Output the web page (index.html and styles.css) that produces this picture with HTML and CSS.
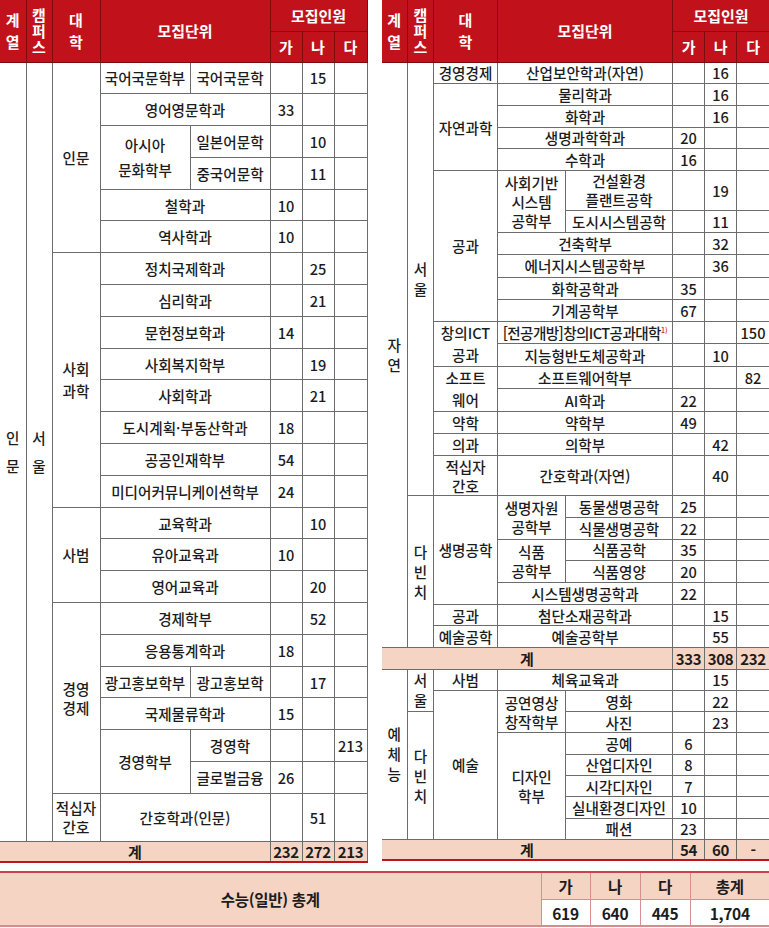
FILE: index.html
```html
<!DOCTYPE html>
<html lang="ko">
<head>
<meta charset="utf-8">
<title>수능(일반) 모집인원</title>
<link rel="stylesheet" href="styles.css">
</head>
<body>
<div class="page">
  <div class="tables">
    <table class="t tl">
      <colgroup><col class="w26"><col class="w26"><col class="w48"><col class="w90"><col class="w80"><col class="w32"><col class="w32"><col class="w33"></colgroup>
      <thead>
        <tr class="hr"><th rowspan="2" class="hv">계<br>열</th><th rowspan="2" class="hv3">캠<br>퍼<br>스</th><th rowspan="2" class="hv">대<br>학</th><th rowspan="2" colspan="2">모집단위</th><th colspan="3">모집인원</th></tr>
        <tr class="hr"><th>가</th><th>나</th><th>다</th></tr>
      </thead>
      <tbody>
        <tr><td rowspan="24" class="vl">인<br>문</td><td rowspan="24" class="vl">서<br>울</td><td rowspan="6">인문</td><td>국어국문학부</td><td>국어국문학</td><td></td><td>15</td><td></td></tr>
        <tr><td colspan="2">영어영문학과</td><td>33</td><td></td><td></td></tr>
        <tr><td rowspan="2" class="lh25">아시아<br>문화학부</td><td>일본어문학</td><td></td><td>10</td><td></td></tr>
        <tr><td>중국어문학</td><td></td><td>11</td><td></td></tr>
        <tr><td colspan="2">철학과</td><td>10</td><td></td><td></td></tr>
        <tr><td colspan="2">역사학과</td><td>10</td><td></td><td></td></tr>
        <tr><td rowspan="8" class="lh22">사회<br>과학</td><td colspan="2">정치국제학과</td><td></td><td>25</td><td></td></tr>
        <tr><td colspan="2">심리학과</td><td></td><td>21</td><td></td></tr>
        <tr><td colspan="2">문헌정보학과</td><td>14</td><td></td><td></td></tr>
        <tr><td colspan="2">사회복지학부</td><td></td><td>19</td><td></td></tr>
        <tr><td colspan="2">사회학과</td><td></td><td>21</td><td></td></tr>
        <tr><td colspan="2">도시계획·부동산학과</td><td>18</td><td></td><td></td></tr>
        <tr><td colspan="2">공공인재학부</td><td>54</td><td></td><td></td></tr>
        <tr><td colspan="2">미디어커뮤니케이션학부</td><td>24</td><td></td><td></td></tr>
        <tr><td rowspan="3">사범</td><td colspan="2">교육학과</td><td></td><td>10</td><td></td></tr>
        <tr><td colspan="2">유아교육과</td><td>10</td><td></td><td></td></tr>
        <tr><td colspan="2">영어교육과</td><td></td><td>20</td><td></td></tr>
        <tr><td rowspan="6">경영<br>경제</td><td colspan="2">경제학부</td><td></td><td>52</td><td></td></tr>
        <tr><td colspan="2">응용통계학과</td><td>18</td><td></td><td></td></tr>
        <tr><td>광고홍보학부</td><td>광고홍보학</td><td></td><td>17</td><td></td></tr>
        <tr><td colspan="2">국제물류학과</td><td>15</td><td></td><td></td></tr>
        <tr><td rowspan="2">경영학부</td><td>경영학</td><td></td><td></td><td>213</td></tr>
        <tr><td>글로벌금융</td><td>26</td><td></td><td></td></tr>
        <tr class="tall"><td>적십자<br>간호</td><td colspan="2">간호학과(인문)</td><td></td><td>51</td><td></td></tr>
        <tr class="sum last"><td colspan="5">계</td><td>232</td><td>272</td><td>213</td></tr>
      </tbody>
    </table>

    <table class="t tr">
      <colgroup><col class="w26"><col class="w26"><col class="w64"><col class="w68"><col class="w107"><col class="w32"><col class="w32"><col class="w33"></colgroup>
      <thead>
        <tr class="hr"><th rowspan="2" class="hv">계<br>열</th><th rowspan="2" class="hv3">캠<br>퍼<br>스</th><th rowspan="2" class="hv">대<br>학</th><th rowspan="2" colspan="2">모집단위</th><th colspan="3">모집인원</th></tr>
        <tr class="hr"><th>가</th><th>나</th><th>다</th></tr>
      </thead>
      <tbody>
        <tr class="a"><td rowspan="25" class="vr">자<br>연</td><td rowspan="18" class="vr">서<br>울</td><td>경영경제</td><td colspan="2">산업보안학과(자연)</td><td></td><td>16</td><td></td></tr>
        <tr class="a"><td rowspan="4">자연과학</td><td colspan="2">물리학과</td><td></td><td>16</td><td></td></tr>
        <tr class="a"><td colspan="2">화학과</td><td></td><td>16</td><td></td></tr>
        <tr class="a"><td colspan="2">생명과학학과</td><td>20</td><td></td><td></td></tr>
        <tr class="a"><td colspan="2">수학과</td><td>16</td><td></td><td></td></tr>
        <tr class="tall"><td rowspan="6">공과</td><td rowspan="2">사회기반<br>시스템<br>공학부</td><td>건설환경<br>플랜트공학</td><td></td><td>19</td><td></td></tr>
        <tr class="b"><td>도시시스템공학</td><td></td><td>11</td><td></td></tr>
        <tr class="b"><td colspan="2">건축학부</td><td></td><td>32</td><td></td></tr>
        <tr class="b"><td colspan="2">에너지시스템공학부</td><td></td><td>36</td><td></td></tr>
        <tr class="b"><td colspan="2">화학공학과</td><td>35</td><td></td><td></td></tr>
        <tr class="b"><td colspan="2">기계공학부</td><td>67</td><td></td><td></td></tr>
        <tr class="b"><td rowspan="2" class="lh22">창의ICT<br>공과</td><td colspan="2" class="tight">[전공개방]창의ICT공과대학<sup class="fn">1)</sup></td><td></td><td></td><td>150</td></tr>
        <tr class="b"><td colspan="2">지능형반도체공학과</td><td></td><td>10</td><td></td></tr>
        <tr class="b"><td rowspan="2" class="lh22">소프트<br>웨어</td><td colspan="2">소프트웨어학부</td><td></td><td></td><td>82</td></tr>
        <tr class="b"><td colspan="2">AI학과</td><td>22</td><td></td><td></td></tr>
        <tr class="b"><td>약학</td><td colspan="2">약학부</td><td>49</td><td></td><td></td></tr>
        <tr class="b"><td>의과</td><td colspan="2">의학부</td><td></td><td>42</td><td></td></tr>
        <tr class="tall"><td>적십자<br>간호</td><td colspan="2">간호학과(자연)</td><td></td><td>40</td><td></td></tr>
        <tr class="a"><td rowspan="7" class="vr">다<br>빈<br>치</td><td rowspan="5">생명공학</td><td rowspan="2">생명자원<br>공학부</td><td>동물생명공학</td><td>25</td><td></td><td></td></tr>
        <tr class="a"><td>식물생명공학</td><td>22</td><td></td><td></td></tr>
        <tr class="a"><td rowspan="2">식품<br>공학부</td><td>식품공학</td><td>35</td><td></td><td></td></tr>
        <tr class="a"><td>식품영양</td><td>20</td><td></td><td></td></tr>
        <tr class="a"><td colspan="2">시스템생명공학과</td><td>22</td><td></td><td></td></tr>
        <tr class="a"><td>공과</td><td colspan="2">첨단소재공학과</td><td></td><td>15</td><td></td></tr>
        <tr class="a"><td>예술공학</td><td colspan="2">예술공학부</td><td></td><td>55</td><td></td></tr>
        <tr class="sum mid"><td colspan="5">계</td><td>333</td><td>308</td><td>232</td></tr>
        <tr class="ye"><td rowspan="8" class="vr">예<br>체<br>능</td><td rowspan="2" class="vr">서<br>울</td><td>사범</td><td colspan="2">체육교육과</td><td></td><td>15</td><td></td></tr>
        <tr class="ye"><td rowspan="7">예술</td><td rowspan="2">공연영상<br>창작학부</td><td>영화</td><td></td><td>22</td><td></td></tr>
        <tr class="ye"><td rowspan="6" class="vr">다<br>빈<br>치</td><td>사진</td><td></td><td>23</td><td></td></tr>
        <tr class="ye"><td rowspan="5">디자인<br>학부</td><td>공예</td><td>6</td><td></td><td></td></tr>
        <tr class="ye"><td>산업디자인</td><td>8</td><td></td><td></td></tr>
        <tr class="ye"><td>시각디자인</td><td>7</td><td></td><td></td></tr>
        <tr class="ye"><td>실내환경디자인</td><td>10</td><td></td><td></td></tr>
        <tr class="ye"><td>패션</td><td>23</td><td></td><td></td></tr>
        <tr class="sum last"><td colspan="5">계</td><td>54</td><td>60</td><td>-</td></tr>
      </tbody>
    </table>
  </div>

  <table class="total">
    <colgroup><col class="w541"><col class="w49"><col class="w50"><col class="w50"><col class="w79"></colgroup>
    <tr class="th-row"><td rowspan="2" class="label">수능(일반) 총계</td><td>가</td><td>나</td><td>다</td><td>총계</td></tr>
    <tr class="val-row"><td>619</td><td>640</td><td>445</td><td>1,704</td></tr>
  </table>
</div>
</body>
</html>
```

FILE: styles.css
```css
body {
  margin: 0;
  background: #ffffff;
  font-family: "Noto Sans CJK KR", "Noto Sans", sans-serif;
  color: #1c1c1c;
}

.page {
  width: 769px;
}

.tables {
  display: flex;
  align-items: flex-start;
  gap: 14px;
}

col.w26 { width: 26px; }
col.w32 { width: 32px; }
col.w33 { width: 33px; }
col.w48 { width: 48px; }
col.w64 { width: 64px; }
col.w68 { width: 68px; }
col.w80 { width: 80px; }
col.w90 { width: 90px; }
col.w107 { width: 107px; }
col.w541 { width: 541px; }
col.w49 { width: 49px; }
col.w50 { width: 50px; }
col.w79 { width: 79px; }

.t {
  border-collapse: collapse;
  table-layout: fixed;
  border-top-style: hidden;
  border-left-style: hidden;
}

.tl { width: 367px; }
.tr { width: 388px; }

.t td,
.t th {
  padding: 0;
  text-align: center;
  vertical-align: middle;
  white-space: nowrap;
  overflow: hidden;
  border: 1px solid #6c6c6c;
  font-size: 14.6px;
  line-height: 19px;
  font-weight: 500;
}

.t th {
  background: #c1121b;
  color: #ffffff;
  font-weight: 700;
  font-size: 15px;
  border-color: #7e0b10;
}

.t .hr { height: 31px; }

.t th.hv { line-height: 22px; }
.t th.hv3 { line-height: 16px; }

.tl tbody tr { height: 31.8px; }
.tl tbody tr.tall { height: 48px; }

.tr tbody tr.a { height: 21.7px; }
.tr tbody tr.b { height: 22.2px; }
.tr tbody tr.tall { height: 40px; }
.tr tbody tr.ye { height: 21.3px; }

.t td.vl { line-height: 28px; }
.t td.vr { line-height: 20px; }
.t td.lh25 { line-height: 25px; }
.t td.lh22 { line-height: 22px; }

.t td.tight { letter-spacing: -0.6px; }

.fn {
  color: #d0141c;
  font-size: 7px;
  line-height: 0;
  vertical-align: 6px;
  letter-spacing: 0;
}

.t tr.sum td {
  background: #f5d4c4;
  font-weight: 700;
  font-size: 15px;
  letter-spacing: -0.3px;
}

.tl tr.sum { height: 20px; }
.tr tr.sum.mid { height: 21.5px; }
.tr tr.sum.last { height: 19px; }

.t tr.sum.last td {
  border-bottom: 2px solid #c0141c;
}

.total {
  margin-top: 8px;
  width: 769px;
  border-collapse: collapse;
  table-layout: fixed;
  border-left-style: hidden;
  border-right-style: hidden;
  border-top: 2px solid #c8444a;
  border-bottom: 2px solid #d98a8a;
}

.total td {
  padding: 0;
  text-align: center;
  vertical-align: middle;
  border: 1px solid #d88f8f;
  font-weight: 700;
  font-size: 15.5px;
  line-height: 20px;
  letter-spacing: -0.3px;
  color: #1c1c1c;
}

.total .th-row { height: 28px; }
.total .val-row { height: 26px; }

.total .th-row td,
.total td.label {
  background: #f5d4c4;
}

.total .val-row td {
  background: #ffffff;
}
```
